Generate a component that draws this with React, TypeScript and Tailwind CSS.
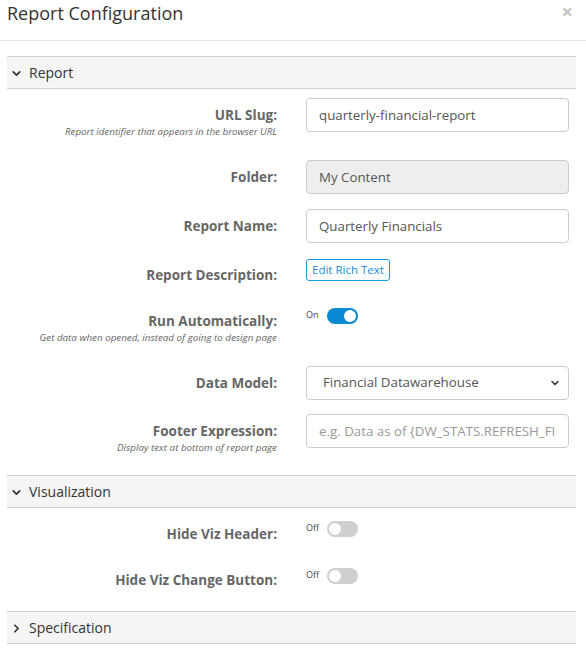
import { ChevronDown, ChevronRight } from 'lucide-react';

const font = { fontFamily: '"Open Sans", "Noto Sans", sans-serif' };

function SectionHeader({ title, open }: { title: string; open: boolean }) {
  return (
    <div className="h-[33px] border-y border-[#d0d0d0] bg-[#f5f5f5] flex items-center pl-[3px] text-[14px] text-[#333]">
      {open ? (
        <ChevronDown className="w-[13px] h-[13px] mr-[6px] mt-[1px]" strokeWidth={3.2} />
      ) : (
        <ChevronRight className="w-[13px] h-[13px] mr-[6px] mt-[1px]" strokeWidth={3.2} />
      )}
      <span>{title}</span>
    </div>
  );
}

function Label({ text, help, pt = 'pt-[7px]' }: { text: string; help?: string; pt?: string }) {
  return (
    <div className={`w-[270px] shrink-0 text-right ${pt}`}>
      <div className="text-[13.5px] leading-[20px] font-bold text-[#666]">{text}</div>
      {help && <div className="text-[9.8px] leading-[14px] italic text-[#666]">{help}</div>}
    </div>
  );
}

function Toggle({ on }: { on: boolean }) {
  return (
    <div className="flex items-start gap-[8px]">
      <span className="text-[9px] leading-[12px] text-[#444] mt-[1px]">{on ? 'On' : 'Off'}</span>
      <div
        className={`w-[31px] h-[16px] rounded-full flex items-center px-[2px] ${
          on ? 'bg-[#0a88d2] justify-end' : 'bg-[#cfcfcf] justify-start'
        }`}
      >
        <div className="w-[12px] h-[12px] rounded-full bg-white" />
      </div>
    </div>
  );
}

const inputCls =
  'w-[263px] h-[34px] border border-[#ccc] rounded-[4px] px-[12px] text-[13.3px] text-[#555] outline-none';

export default function App() {
  return (
    <div className="w-[586px] h-[655px] bg-white overflow-hidden" style={font}>
      <div className="h-[41px] border-b border-[#e5e5e5] flex items-start justify-between pl-[7px] pr-[13px]">
        <h1 className="text-[18px] leading-[26px] text-[#333]">Report Configuration</h1>
        <span className="text-[20px] leading-[22px] pt-[1px] font-bold text-[#c4c4c4]">×</span>
      </div>

      <div className="pl-[7px] pr-[10px] pt-[15px]">
        <SectionHeader title="Report" open />

        <div className="pt-[9px] pb-[20px]">
          <div className="flex gap-[29px] mb-[21px]">
            <Label text="URL Slug:" help="Report identifier that appears in the browser URL" />
            <input className={inputCls} defaultValue="quarterly-financial-report" />
          </div>
          <div className="flex gap-[29px] mb-[15px]">
            <Label text="Folder:" />
            <input className={`${inputCls} bg-[#eee]`} defaultValue="My Content" readOnly />
          </div>
          <div className="flex gap-[29px] mb-[15px]">
            <Label text="Report Name:" />
            <input className={inputCls} defaultValue="Quarterly Financials" />
          </div>
          <div className="flex gap-[29px] mb-[14px] min-h-[34px]">
            <Label text="Report Description:" />
            <div className="pt-[1px]">
              <button className="block h-[22px] px-[5px] border border-[#1a9ad6] rounded-[3px] text-[11.5px] leading-[20px] text-[#1a8fd0] bg-white">
                Edit Rich Text
              </button>
            </div>
          </div>
          <div className="flex gap-[29px] mb-[21px]">
            <Label
              text="Run Automatically:"
              help="Get data when opened, instead of going to design page"
              pt="pt-[5px]"
            />
            <div className="pt-[2px]">
              <Toggle on />
            </div>
          </div>
          <div className="flex gap-[29px] mb-[14px]">
            <Label text="Data Model:" />
            <div className="relative">
              <select className={`${inputCls} appearance-none pl-[16px] bg-white`} defaultValue="fd">
                <option value="fd">Financial Datawarehouse</option>
              </select>
              <ChevronDown
                className="absolute right-[8px] top-[11px] w-[12px] h-[12px] text-[#333] pointer-events-none"
                strokeWidth={3}
              />
            </div>
          </div>
          <div className="flex gap-[29px]">
            <Label text="Footer Expression:" help="Display text at bottom of report page" />
            <input
              className={`${inputCls} placeholder:text-[#999]`}
              placeholder="e.g. Data as of {DW_STATS.REFRESH_FINISHED}"
            />
          </div>
        </div>

        <SectionHeader title="Visualization" open />

        <div className="pt-[9px] pb-[14px]">
          <div className="flex gap-[29px] mb-[12px] h-[34px]">
            <Label text="Hide Viz Header:" />
            <div className="pt-[4px]">
              <Toggle on={false} />
            </div>
          </div>
          <div className="flex gap-[29px] h-[34px]">
            <Label text="Hide Viz Change Button:" />
            <div className="pt-[5px]">
              <Toggle on={false} />
            </div>
          </div>
        </div>

        <SectionHeader title="Specification" open={false} />
      </div>
    </div>
  );
}
